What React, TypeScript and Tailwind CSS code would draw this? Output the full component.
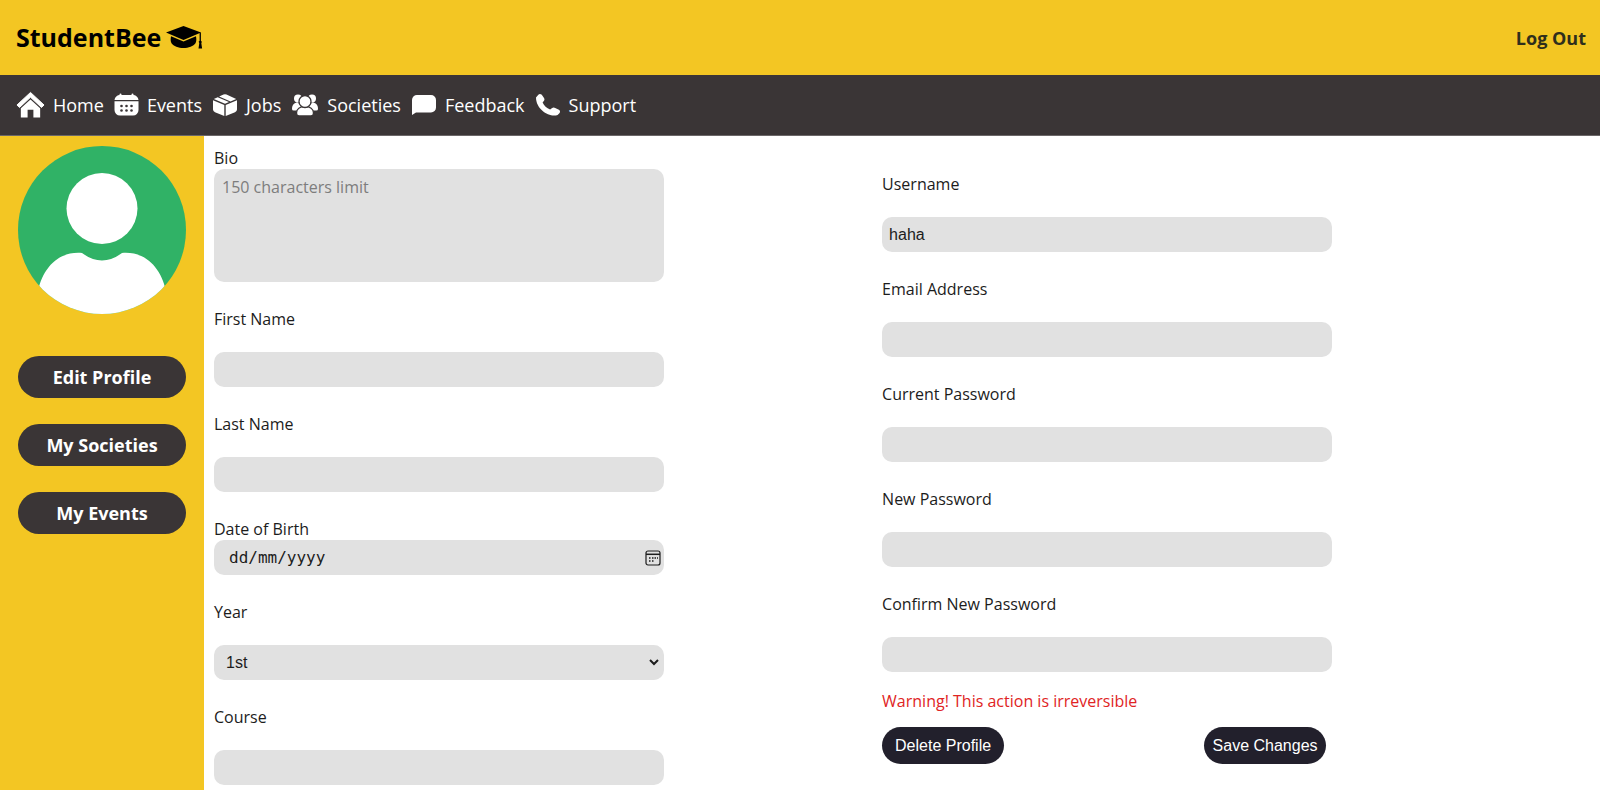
import type { ReactNode } from "react";

const control = "block h-[35px] w-full rounded-[10px] bg-[#e1e1e1] font-['Liberation_Sans',sans-serif] text-base text-[#1c1c1c]";

function Field({ id, label, tight, children }: { id: string; label: string; tight?: boolean; children: ReactNode }) {
  return (
    <div className={tight ? "flex flex-col" : "flex flex-col gap-[22px]"}>
      <label htmlFor={id} className="leading-[21px]">{label}</label>
      {children}
    </div>
  );
}

function CapIcon() {
  return (
    <svg viewBox="0 0 38 26" className="h-[26px] w-[38px]" fill="currentColor" aria-hidden="true">
      <path d="M18.500 1 36 7.500 18.500 15 1 7.500z" />
      <path d="M6 11.200l12.500 5.300L31 11.200c.5 3 .5 5-.5 7-2 3-7 4.800-12 4.800s-10-1.800-12-4.800c-1-2-1-4-.5-7z" />
      <path d="M34.600 7.500h1.300v8.200a1.400 1.400 0 0 1 .4 2.300l.8 5.500h-3.600l.8-5.500a1.400 1.400 0 0 1 .3-2.300z" />
    </svg>
  );
}

function HomeIcon() {
  return (
    <svg viewBox="0 0 30 28" className="h-7 w-[29px]" fill="currentColor" aria-hidden="true">
      <path d="M15 1 1 14l2.600 2.600L15 6l11.400 10.600L29 14z" stroke="currentColor" strokeWidth="1" strokeLinejoin="round" />
      <path d="M15 8.200 5 17.400V27h7v-8h6v8h7v-9.600z" />
    </svg>
  );
}

function CalendarIcon() {
  return (
    <svg viewBox="0 0 25 24" className="h-6 w-[25px]" aria-hidden="true">
      <path fill="currentColor" d="M6 2h13a5.500 5.500 0 0 1 5.500 5H.5A5.500 5.500 0 0 1 6 2zM.5 8.300h24V17a5.500 5.500 0 0 1-5.500 5.500H6A5.500 5.500 0 0 1 .5 17z" />
      <path stroke="currentColor" strokeWidth="2" strokeLinecap="round" d="M6.500 1.500v3M18.500 1.500v3" />
      <g className="fill-[#3a3536]">
        <circle cx="7.500" cy="13" r="1.300" /><circle cx="12.500" cy="13" r="1.300" /><circle cx="17.500" cy="13" r="1.300" />
        <circle cx="7.500" cy="17.500" r="1.300" /><circle cx="12.500" cy="17.500" r="1.300" /><circle cx="17.500" cy="17.500" r="1.300" />
      </g>
    </svg>
  );
}

function BoxIcon() {
  return (
    <svg viewBox="0 0 25 24" className="h-6 w-[26px]" fill="currentColor" aria-hidden="true">
      <path d="M.5 7.300 11.800 12v11L2.500 19.200Q.5 18.300.5 16.500zM24.500 7.300 13.200 12v11l9.300-3.800q2-.9 2-2.700z" />
      <path d="M1.300 5.900 5.200 4.200 16.500 9l-4 1.700zM6.600 3.600 11 1.600q1.500-.6 3 0l9.700 4.300L18 8.400z" />
    </svg>
  );
}

function PeopleIcon() {
  return (
    <svg viewBox="0 0 27 24" className="h-6 w-7" fill="currentColor" aria-hidden="true">
      <circle cx="6.500" cy="5.500" r="4" /><circle cx="20.500" cy="5.500" r="4" />
      <path d="M.5 16c0-4 2-6.500 6-6.500l4 5-4 3H2.300Q.5 17.500.5 16zM26.500 16c0-4-2-6.500-6-6.500l-4 5 4 3h4.200q1.800 0 1.800-1.500z" />
      <g className="stroke-[#3a3536]" strokeWidth="1.300">
        <path d="M5 20c0-4 3.500-6.500 8.500-6.500S22 16 22 20q0 3-2.500 3h-12Q5 23 5 20z" />
        <circle cx="13.500" cy="8.500" r="6" />
      </g>
    </svg>
  );
}

function ChatIcon() {
  return (
    <svg viewBox="0 0 25 24" className="h-6 w-[26px]" fill="currentColor" aria-hidden="true">
      <path d="M6 2h13.500a5 5 0 0 1 5 5v7.500a5 5 0 0 1-5 5H4.500L.5 22V7A5 5 0 0 1 6 2z" />
    </svg>
  );
}

function PhoneIcon() {
  return (
    <svg viewBox="0 0 25 24" className="h-6 w-[26px]" fill="currentColor" aria-hidden="true">
      <path d="M.5 4.500 2.800 1.700Q4.500.4 6.300 1.800l2.200 3.100q1 1.700-.2 3.200L7.100 9.500c1.500 3.300 4 5.700 7.500 7l1.700-1.300q1.700-1.200 3.400-.3l3.700 1.900q1.800 1.300.7 3.100l-2 2C15 25 .5 17 .5 4.500z" />
    </svg>
  );
}

function DateIcon() {
  return (
    <svg viewBox="0 0 16 16" className="size-4" fill="none" stroke="currentColor" aria-hidden="true">
      <rect x="1" y="1" width="14" height="14" rx="2" strokeWidth="1.200" />
      <path d="M1 4.300h14" strokeWidth="1.500" />
      <path d="M7 8h1.500M9.500 8H11M12 8h1M4 8h1.500M4 11h1.500M7 11h1.500" strokeWidth="1.500" />
    </svg>
  );
}

const links = [
  { label: "Home", icon: <HomeIcon /> },
  { label: "Events", icon: <CalendarIcon /> },
  { label: "Jobs", icon: <BoxIcon /> },
  { label: "Societies", icon: <PeopleIcon /> },
  { label: "Feedback", icon: <ChatIcon /> },
  { label: "Support", icon: <PhoneIcon /> },
];

const account = [
  { id: "username", label: "Username", type: "text", value: "haha" },
  { id: "email", label: "Email Address", type: "email", value: "" },
  { id: "current", label: "Current Password", type: "password", value: "" },
  { id: "new", label: "New Password", type: "password", value: "" },
  { id: "confirm", label: "Confirm New Password", type: "password", value: "" },
];

export default function App() {
  return (
    <div className="flex min-h-screen flex-col bg-white font-['Open_Sans',sans-serif] text-base text-[#1c1c1c]">
      <header className="flex h-[75px] items-center justify-between bg-[#f3c623] pr-[14px] pl-4">
        <a href="#home" className="flex items-center gap-1 text-[25px] font-bold text-black">
          StudentBee
          <CapIcon />
        </a>
        <a href="#logout" className="text-lg font-bold text-[#2f2f1c]">Log Out</a>
      </header>
      <nav className="flex h-[61px] items-center gap-[10px] border-b border-[#6b6768] bg-[#3a3536] px-4 text-lg text-white">
        {links.map((link) => (
          <a key={link.label} href={"#" + link.label.toLowerCase()} className="flex items-center gap-2">
            {link.icon}
            {link.label}
          </a>
        ))}
      </nav>
      <div className="flex flex-1">
        <aside className="flex w-[204px] shrink-0 flex-col items-center bg-[#f3c623] pt-[10px]">
          <svg viewBox="0 0 168 168" className="mb-[42px] size-[168px]" role="img" aria-label="Profile picture">
            <defs><clipPath id="avatar"><circle cx="84" cy="84" r="84" /></clipPath></defs>
            <g clipPath="url(#avatar)">
              <rect width="168" height="168" fill="#30b266" />
              <circle cx="84" cy="62.500" r="35.500" fill="#fff" />
              <path d="M20 145C25 122 40 105 64 107q20 15 40 0c24-2 39 15 44 38v25H20z" fill="#fff" />
            </g>
          </svg>
          <div className="flex flex-col gap-[26px]">
            {["Edit Profile", "My Societies", "My Events"].map((t) => (
              <button key={t} type="button" className="h-[42px] w-[168px] rounded-full bg-[#3a3536] text-lg font-bold text-white">{t}</button>
            ))}
          </div>
        </aside>
        <form className="grid flex-1 grid-cols-[48%_52%] items-start">
          <div className="flex max-w-[460px] flex-col gap-[27px] pt-3 pb-5 pl-[10px]">
            <Field id="bio" label="Bio" tight>
              <textarea id="bio" placeholder="150 characters limit" className="block h-[113px] w-full resize-none rounded-[10px] bg-[#e1e1e1] px-2 py-[7px] leading-[22px] placeholder:text-[#7d7d7d]" />
            </Field>
            <Field id="first" label="First Name"><input id="first" type="text" className={control + " px-[7px]"} /></Field>
            <Field id="last" label="Last Name"><input id="last" type="text" className={control + " px-[7px]"} /></Field>
            <Field id="dob" label="Date of Birth" tight>
              <div className="flex h-[35px] items-center rounded-[10px] bg-[#e1e1e1] pr-[3px] pl-[15px]">
                <input id="dob" type="text" placeholder="dd/mm/yyyy" className="min-w-0 flex-1 font-['DejaVu_Sans_Mono',monospace] text-base placeholder:text-[#1c1c1c]" />
                <button type="button" aria-label="Open calendar"><DateIcon /></button>
              </div>
            </Field>
            <Field id="year" label="Year">
              <select id="year" className={control + " border-r-2 border-[#e1e1e1] pl-2"}><option>1st</option><option>2nd</option><option>3rd</option></select>
            </Field>
            <Field id="course" label="Course"><input id="course" type="text" className={control + " px-[7px]"} /></Field>
          </div>
          <div className="flex max-w-[458px] flex-col gap-[27px] pt-[38px] pb-5 pl-2">
            {account.map((f) => (
              <Field key={f.id} id={f.id} label={f.label}>
                <input id={f.id} type={f.type} defaultValue={f.value} className={control + " px-[7px]"} />
              </Field>
            ))}
            <div className="-mt-2 flex flex-col gap-[15px]">
              <p className="leading-[21px] text-[#e02424]">Warning! This action is irreversible</p>
              <div className="flex justify-between pr-[6px] font-['Liberation_Sans',sans-serif] text-white">
                <button type="button" className="h-[37px] w-[122px] rounded-full bg-[#22202c]">Delete Profile</button>
                <button type="submit" className="h-[37px] w-[122px] rounded-full bg-[#22202c]">Save Changes</button>
              </div>
            </div>
          </div>
        </form>
      </div>
    </div>
  );
}
